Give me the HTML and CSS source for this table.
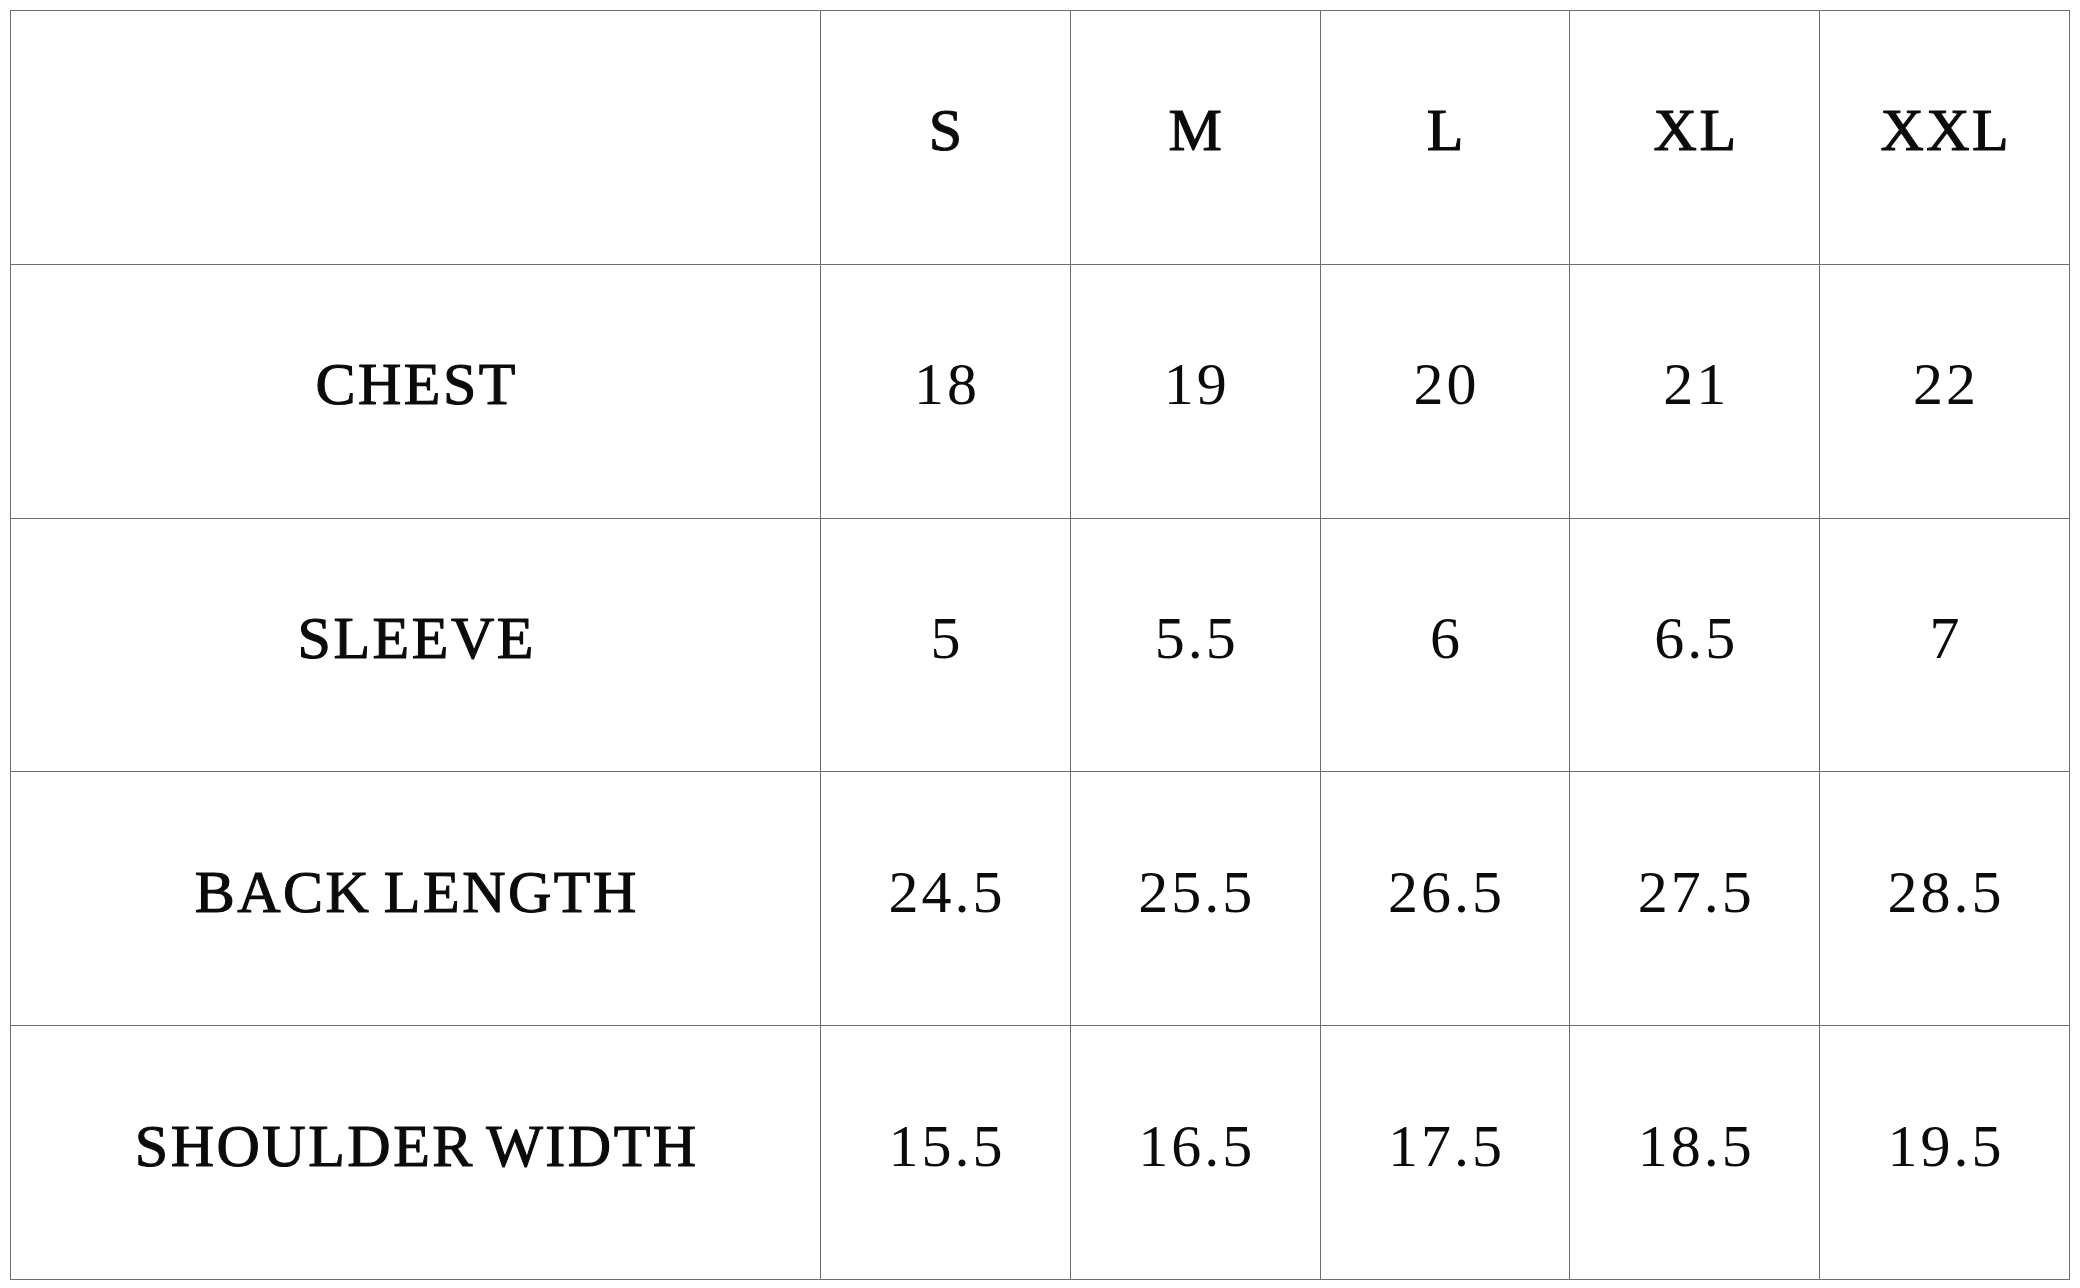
FILE: index.html
```html
<!DOCTYPE html>
<html>
<head>
<meta charset="utf-8">
<link rel="stylesheet" href="styles.css">
</head>
<body>
<div class="chart">
  <div class="cell"></div>
  <div class="cell head">S</div>
  <div class="cell head">M</div>
  <div class="cell head">L</div>
  <div class="cell head">XL</div>
  <div class="cell head">XXL</div>

  <div class="cell label">CHEST</div>
  <div class="cell num">18</div>
  <div class="cell num">19</div>
  <div class="cell num">20</div>
  <div class="cell num">21</div>
  <div class="cell num">22</div>

  <div class="cell label">SLEEVE</div>
  <div class="cell num">5</div>
  <div class="cell num">5.5</div>
  <div class="cell num">6</div>
  <div class="cell num">6.5</div>
  <div class="cell num">7</div>

  <div class="cell label">BACK LENGTH</div>
  <div class="cell num">24.5</div>
  <div class="cell num">25.5</div>
  <div class="cell num">26.5</div>
  <div class="cell num">27.5</div>
  <div class="cell num">28.5</div>

  <div class="cell label">SHOULDER WIDTH</div>
  <div class="cell num">15.5</div>
  <div class="cell num">16.5</div>
  <div class="cell num">17.5</div>
  <div class="cell num">18.5</div>
  <div class="cell num">19.5</div>
</div>
</body>
</html>
```

FILE: styles.css
```css
html, body {
  margin: 0;
  padding: 0;
  background: #ffffff;
}

body {
  padding: 10px 0 0 10px;
  font-family: "Liberation Serif", "Times New Roman", serif;
  color: #0a0c0c;
}

.chart {
  display: grid;
  grid-template-columns: 810px repeat(5, 1fr);
  grid-template-rows: repeat(5, 1fr);
  width: 2060px;
  height: 1270px;
  box-sizing: border-box;
  border-top: 1px solid #6e6e6e;
  border-left: 1px solid #6e6e6e;
}

.cell {
  display: flex;
  align-items: center;
  justify-content: center;
  border-right: 1px solid #6e6e6e;
  border-bottom: 1px solid #6e6e6e;
  padding-bottom: 13px;
  box-sizing: border-box;
  font-size: 60px;
  white-space: nowrap;
}

.head,
.label {
  letter-spacing: 2.5px;
  word-spacing: -5px;
  padding-left: 2.5px;
  -webkit-text-stroke: 1.1px #0a0c0c;
}

.num {
  letter-spacing: 3px;
  padding-left: 3px;
}
```
